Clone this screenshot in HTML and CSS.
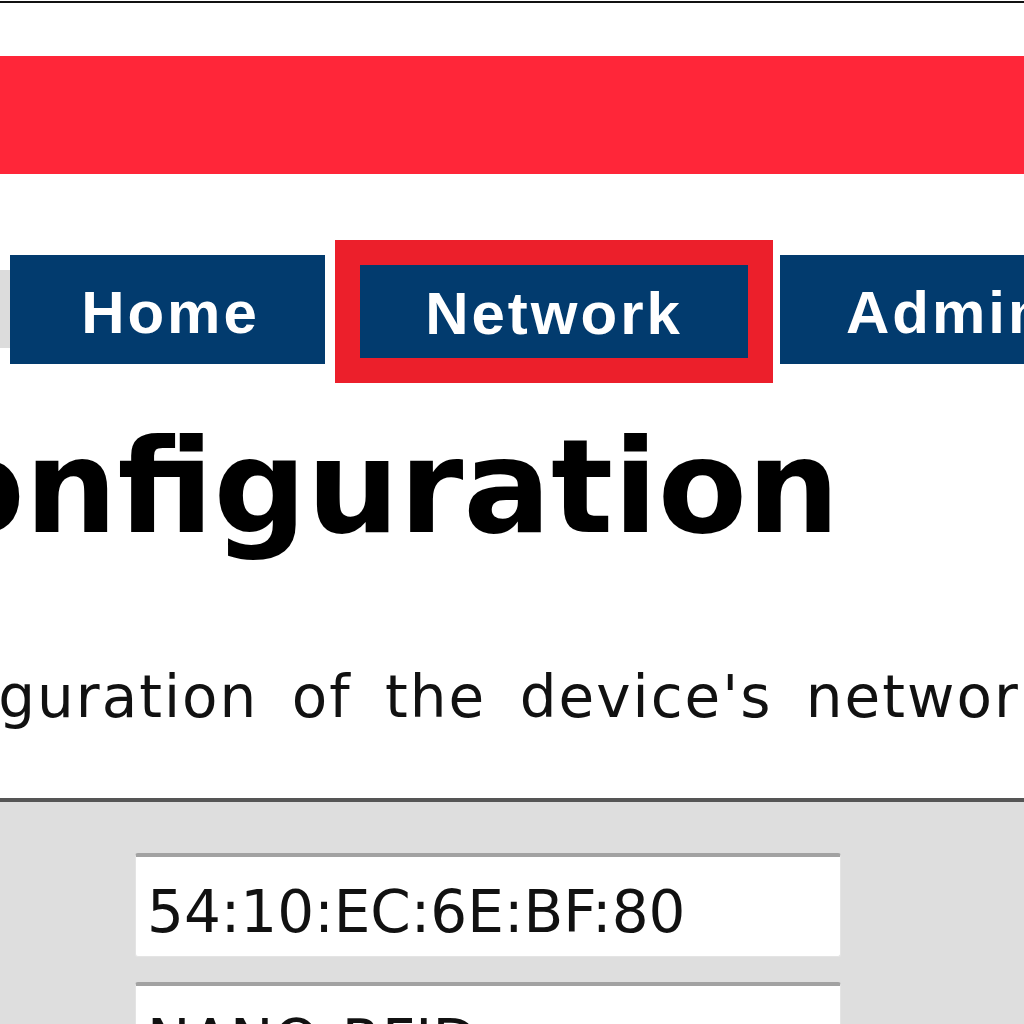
FILE: index.html
```html
<!DOCTYPE html>
<html lang="en">
<head>
<meta charset="utf-8">
<title>Network Configuration</title>
<link rel="stylesheet" href="styles.css">
</head>
<body>
<div class="page">
  <div class="topline"></div>
  <header class="banner"></header>
  <nav class="nav">
    <div class="nav-edge"></div>
    <a class="tab" href="#">Home</a>
    <a class="tab active" href="#">Network</a>
    <a class="tab admin" href="#">Admin</a>
  </nav>
  <h1 class="title">Configuration</h1>
  <p class="intro">Configuration of the device's network settings.</p>
  <section class="panel">
    <input class="field" type="text" value="54:10:EC:6E:BF:80">
    <input class="field" type="text" value="NANO-RFID">
  </section>
</div>
</body>
</html>
```
FILE: styles.css
```css
html, body {
  margin: 0;
  padding: 0;
  background: #ffffff;
}

.page {
  width: 1024px;
  height: 1024px;
  overflow: hidden;
  background: #ffffff;
}

.topline {
  height: 2px;
  margin-top: 1px;
  background: #111111;
}

.banner {
  height: 118px;
  margin-top: 53px;
  background: #ff2639;
}

.nav {
  display: flex;
  align-items: flex-start;
  margin-top: 66px;
  height: 143px;
}

.nav-edge {
  flex: 0 0 10px;
  height: 78px;
  margin-top: 30px;
  background: #dcdcdc;
}

.tab {
  flex: 0 0 315px;
  box-sizing: border-box;
  height: 109px;
  margin-top: 15px;
  display: flex;
  align-items: center;
  justify-content: center;
  padding-top: 6px;
  padding-left: 6px;
  background: #023b6e;
  color: #ffffff;
  text-decoration: none;
  font-family: "Liberation Sans", Arial, sans-serif;
  font-weight: 700;
  font-size: 60px;
  letter-spacing: 3px;
}

.tab.active {
  flex: 0 0 438px;
  height: 143px;
  margin-top: 0;
  margin-left: 10px;
  border: 25px solid #ec1f2b;
  padding-left: 0;
  padding-top: 4px;
}

.tab.admin {
  flex: 0 0 330px;
  margin-left: 7px;
  justify-content: flex-start;
  padding-left: 66px;
}

.title {
  margin: 29px 0 0 -160px;
  font-family: "DejaVu Sans", Verdana, sans-serif;
  font-weight: 700;
  font-size: 130px;
  line-height: 150px;
  color: #000000;
  white-space: nowrap;
}

.intro {
  margin: 102px 0 0 -161px;
  font-family: "DejaVu Sans", Verdana, Tahoma, sans-serif;
  font-size: 58px;
  line-height: 66px;
  letter-spacing: 2px;
  word-spacing: 13px;
  color: #111111;
  white-space: nowrap;
}

.panel {
  margin-top: 68px;
  border-top: 4px solid #555555;
  background: #dedede;
  padding: 51px 0 0 135px;
  height: 400px;
  display: flex;
  flex-direction: column;
  gap: 25px;
}

.field {
  box-sizing: border-box;
  width: 706px;
  height: 104px;
  margin: 0;
  border: 1px solid #e4e4e4;
  border-top: 4px solid #a2a2a2;
  border-radius: 3px;
  background: #ffffff;
  padding: 10px 10px 0 11px;
  font-family: "DejaVu Sans", Tahoma, sans-serif;
  font-size: 58px;
  color: #111111;
  outline: none;
}
```
